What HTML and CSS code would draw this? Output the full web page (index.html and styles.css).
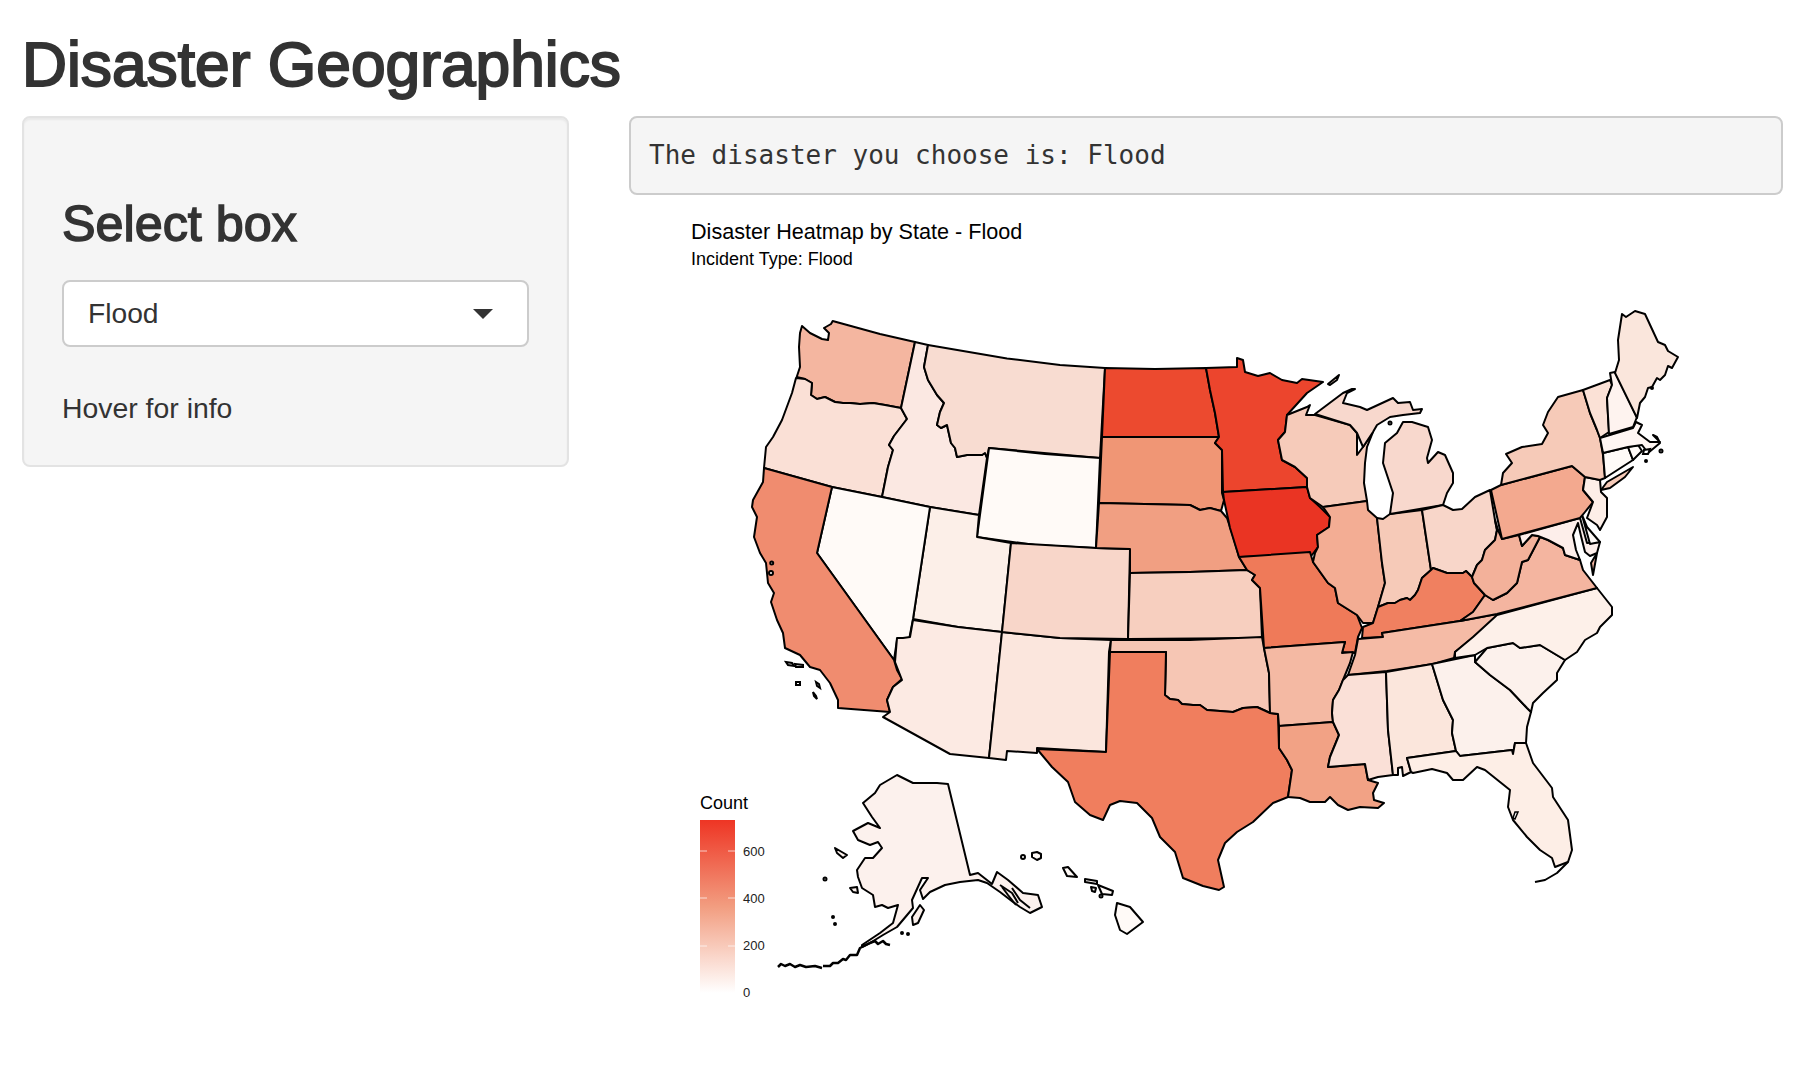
FILE: index.html
```html
<!DOCTYPE html>
<html lang="en">
<head>
  <meta charset="UTF-8">
  <title>Disaster Geographics</title>
  <link rel="stylesheet" href="styles.css">
</head>
<body>
<div class="page">
  <h2 class="page-title">Disaster Geographics</h2>
  <div class="columns">
    <div class="well">
      <h3>Select box</h3>
      <div class="select-box">
        <span>Flood</span>
        <span class="caret"></span>
      </div>
      <p class="hint">Hover for info</p>
    </div>
    <div class="main">
      <pre class="output">The disaster you choose is: Flood</pre>
      <svg class="map" viewBox="629 210 1154 860" width="1154" height="860">
        <defs>
          <linearGradient id="legend-fill" x1="0" y1="0" x2="0" y2="1">
            <stop offset="0" stop-color="#ee3524"/>
            <stop offset="0.5" stop-color="#f29d80"/>
            <stop offset="1" stop-color="#ffffff"/>
          </linearGradient>
        </defs>

        <text class="plot-title" x="691" y="239">Disaster Heatmap by State - Flood</text>
        <text class="plot-subtitle" x="691" y="265">Incident Type: Flood</text>

        <!-- west -->
        <polygon class="st wa" points="832.7,321 880,334 915,342 901,408 885,405 873,403 860,404 850,403 843,403 835,402 825,397 817,399 811,395 812,383 805,379 796.7,377 800,367 799,347 800,333 802,326 810,333 822,339 828,340 829,333 824,328 831,324"/>
        <polygon class="st or" points="796,378 792,393 782,420 773,437 766,447 764,468 832,487 882,497 888,467 893,450 889,445 894,436 907,419 901,408 885,405 873,403 860,404 850,403 843,403 835,402 825,397 817,399 811,395 812,383 805,379"/>
        <polygon class="st id" points="915,342 928,345 924,367 928,380 937,395 944,403 940,412 937,425 941,428 947,425 951,443 955,448 957,457 967,455 982,455 985,453 987,458 979,515 930,507 882,497 888,467 893,450 889,445 894,436 907,419 901,408"/>
        <polygon class="st mt" points="928,345 1007,358.5 1060,365 1105,368 1100,458 989,448 987,458 985,453 982,455 967,455 957,457 955,448 951,443 947,425 941,428 937,425 940,412 944,403 937,395 928,380 924,367"/>
        <polygon class="st wy" points="989,448 1045,454 1100,458 1096,548 1035,545 977,537"/>
        <polygon class="st ut" points="930,507 979,515 977,537 1011,543 1002,632 958,627 913,619"/>
        <polygon class="st nv" points="832,487 882,497 930,507 913,619 909,640 903,638 897,640 894,660 817,553"/>
        <polygon class="st ca" points="764,468 832,487 817,553 894,660 897,670 902,679 893,687 887,700 890,712 838,708 838,700 830,683 820,670 810,667 800,655 785,648 783,633 777,620 771,602 774,593 768,583 766,563 760,553 754,537 757,517 752,507 753,500 763,482"/>
        <polygon class="st az" points="913,620 958,627 1002,632 989,758 950,754 883,717 890,712 887,700 893,687 902,680 895,662 897,638 903,638 910,637"/>
        <polygon class="st nm" points="1002,632 1060,638 1111,640 1109,652 1106,752 1037,748 1037,753 1007,751 1006,760 989,758"/>
        <polygon class="st co" points="1011,543 1096,548 1130,549 1128,639 1060,638 1002,632"/>

        <!-- plains -->
        <polygon class="st nd" points="1105,368 1155,369 1206,368 1210,390 1215,413 1219,437 1102,437"/>
        <polygon class="st sd" points="1102,437 1219,437 1215,443 1222,450 1222,493 1224,500 1221,511 1210,508 1200,510 1190,505 1099,503"/>
        <polygon class="st ne" points="1099,503 1190,505 1200,510 1210,508 1221,511 1227,518 1232,533 1237,550 1239,557 1247,570 1190,572 1130,573 1130,549 1096,548"/>
        <polygon class="st ks" points="1130,573 1190,572 1247,570 1255,575 1252,580 1260,588 1262,638 1128,639"/>
        <polygon class="st ok" points="1111,640 1190,640 1262,637 1264,648 1269,673 1270,713 1257,707 1243,708 1233,712 1220,711 1207,710 1200,705 1193,705 1182,704 1178,700 1170,699 1165,695 1166,652 1110,652"/>
        <polygon class="st tx" points="1110,652 1166,652 1165,695 1170,699 1178,700 1182,704 1193,705 1200,705 1207,710 1220,711 1233,712 1243,708 1257,707 1270,713 1278,714 1279,748 1287,760 1292,770 1288,797 1273,803 1253,822 1237,832 1225,843 1218,860 1224,887 1219,890 1203,886 1183,878 1175,852 1160,837 1152,818 1137,803 1120,801 1110,805 1103,820 1090,815 1075,802 1068,782 1052,767 1037,749 1106,752"/>

        <!-- midwest -->
        <polygon class="st mn" points="1206,368 1237,367 1237,358 1243,360 1245,372 1258,376 1270,373 1282,380 1297,383 1302,379 1323,382 1307,393 1287,415 1285,432 1278,440 1282,460 1295,467 1307,478 1307,487 1223,492 1222,450 1215,443 1219,437 1215,413 1210,390"/>
        <polygon class="st ia" points="1223,492 1307,487 1310,498 1320,507 1330,517 1329,527 1317,535 1318,547 1312,555 1239,557 1230,528 1224,500"/>
        <polygon class="st mo" points="1239,557 1310,552 1313,562 1328,583 1335,588 1338,603 1357,615 1362,628 1358,637 1355,653 1342,652 1345,642 1264,648 1260,588 1252,580 1255,575 1247,570"/>
        <polygon class="st ar" points="1264,648 1345,642 1342,653 1353,652 1350,663 1343,680 1339,690 1333,700 1332,713 1333,722 1279,726 1278,714 1270,713 1269,673"/>
        <polygon class="st la" points="1279,726 1333,722 1339,735 1330,757 1328,767 1365,764 1368,780 1378,783 1373,793 1374,800 1384,803 1378,808 1360,807 1348,810 1338,805 1330,797 1325,802 1310,802 1300,798 1288,797 1292,770 1287,760 1279,748"/>
        <polygon class="st wi" points="1287,415 1307,407 1310,405 1306,415 1315,415 1350,425 1357,433 1357,455 1363,447 1373,432 1367,447 1365,463 1364,483 1367,501 1323,507 1310,498 1307,487 1307,478 1295,467 1282,460 1278,440 1285,432"/>
        <polygon class="st il" points="1323,507 1367,501 1368,510 1377,518 1382,563 1385,583 1378,607 1373,623 1363,623 1357,615 1338,603 1335,588 1328,583 1313,562 1315,553 1318,547 1317,535 1329,527 1330,517"/>
        <polygon class="st in" points="1377,518 1383,519 1390,514 1422,510 1431,570 1422,578 1418,590 1415,595 1410,600 1407,598 1400,600 1395,603 1388,603 1378,607 1385,583 1382,563"/>
        <polygon class="st mi" points="1315,414 1343,393 1352,389 1355,389 1347,393 1343,403 1360,407 1367,410 1393,398 1398,403 1410,402 1413,410 1422,409 1420,413 1403,415 1390,417 1377,425 1373,432 1363,447 1357,433 1350,425"/>
        <polygon class="st mi" points="1403,422 1412,422 1428,427 1432,440 1427,458 1428,463 1438,452 1445,455 1453,473 1453,483 1447,493 1443,505 1390,514 1393,493 1383,463 1385,443 1397,433"/>
        <polygon class="st mi" points="1328,384 1339,375 1337,380 1330,385"/>
        <polygon class="st oh" points="1422,510 1443,505 1453,510 1462,509 1475,497 1490,490 1495,520 1497,530 1495,540 1485,550 1482,560 1477,565 1472,577 1466,571 1463,573 1447,573 1433,568 1431,570"/>
        <polygon class="st ky" points="1362,638 1363,627 1373,623 1378,607 1388,603 1395,603 1400,600 1407,598 1410,600 1415,595 1418,590 1422,578 1431,570 1433,568 1447,573 1463,573 1466,571 1472,577 1474,583 1485,595 1473,612 1460,621 1382,633 1383,637"/>

        <!-- south -->
        <polygon class="st tn" points="1348,675 1355,655 1358,639 1383,637 1382,633 1460,621 1497,614 1495,620 1480,632 1470,640 1455,652 1454,658 1433,664 1387,671"/>
        <polygon class="st ms" points="1348,675 1386,672 1388,730 1393,775 1378,777 1368,780 1365,764 1328,767 1330,757 1339,735 1333,722 1332,713 1333,700 1339,690 1343,680"/>
        <polygon class="st al" points="1386,672 1432,664 1443,700 1453,720 1452,733 1456,751 1407,758 1411,772 1403,776 1402,767 1398,768 1398,775 1393,775 1388,730"/>
        <polygon class="st ga" points="1432,664 1475,655 1475,662 1490,675 1510,690 1527,708 1531,712 1527,727 1526,743 1515,743 1513,754 1512,750 1460,756 1456,751 1452,733 1453,720 1443,700"/>
        <polygon class="st sc" points="1475,662 1487,648 1513,643 1520,648 1540,645 1565,660 1557,673 1557,680 1543,693 1533,703 1531,712 1527,708 1510,690 1490,675"/>
        <polygon class="st nc" points="1455,658 1455,652 1473,637 1497,615 1597,588 1612,607 1612,615 1600,627 1597,633 1585,640 1577,652 1565,660 1540,645 1520,648 1513,643 1487,648 1475,655"/>
        <polygon class="st fl" points="1407,758 1456,751 1460,756 1512,750 1513,754 1515,743 1526,743 1533,763 1552,788 1553,797 1568,820 1572,850 1568,862 1555,867 1552,858 1540,850 1527,837 1513,820 1508,807 1510,790 1500,782 1485,770 1477,767 1463,780 1453,780 1447,773 1432,769 1413,773 1411,772"/>
        <polygon class="islet tampa" points="1515,812 1518,812 1515,819 1513,818"/>
        <polyline class="line" points="1535,882 1545,880 1557,873 1568,862"/>

        <!-- atlantic -->
        <polygon class="st va" points="1485,595 1493,600 1507,593 1517,583 1522,562 1528,560 1540,537 1548,540 1563,548 1565,555 1580,560 1583,570 1597,588 1497,614 1460,621 1473,612"/>
        <polygon class="st va" points="1597,553 1593,575 1591,563"/>
        <polygon class="st wv" points="1495,520 1498,530 1502,539 1519,535 1522,546 1532,535 1538,536 1540,537 1528,560 1522,562 1517,583 1507,593 1493,600 1485,595 1474,583 1472,577 1477,565 1482,560 1485,550 1495,540 1497,530"/>
        <polygon class="st md" points="1519,535 1580,518 1587,543 1600,542 1597,553 1590,556 1585,552 1581,536 1578,523 1573,535 1576,550 1580,560 1565,555 1563,548 1548,540 1538,536 1532,535 1522,546"/>
        <polygon class="st de" points="1582,515 1587,527 1600,542 1590,544"/>
        <polygon class="st pa" points="1491,490 1501,485 1572,466 1585,477 1583,490 1593,502 1585,512 1580,518 1502,539"/>
        <polygon class="st nj" points="1585,477 1600,480 1601,492 1607,498 1607,517 1600,530 1597,525 1587,518 1593,502 1583,490"/>
        <polygon class="st ny" points="1558,397 1583,390 1590,413 1597,430 1600,438 1603,455 1605,478 1600,480 1585,477 1572,466 1501,485 1503,473 1512,463 1506,454 1522,447 1542,444 1548,433 1543,425 1548,412"/>
        <polygon class="st ny" points="1601,490 1607,482 1633,467 1625,477 1610,488"/>
        <polygon class="st ct" points="1603,453 1628,447 1633,460 1605,478"/>
        <polygon class="st ri" points="1628,447 1638,445 1642,451 1633,460"/>
        <polygon class="st ma" points="1600,438 1633,428 1636,422 1642,425 1638,433 1650,442 1660,442 1653,435 1657,437 1660,443 1648,453 1642,445 1628,447 1603,453"/>
        <polygon class="st vt" points="1583,390 1610,380 1612,385 1607,398 1609,432 1600,438 1597,430 1590,413"/>
        <polygon class="st nh" points="1610,373 1615,372 1637,417 1633,427 1609,434 1607,398 1612,385"/>
        <polygon class="st me" points="1622,314 1626,317 1635,311 1645,314 1658,342 1665,345 1668,351 1678,357 1672,368 1668,366 1665,375 1660,380 1657,378 1652,387 1648,388 1645,397 1640,403 1637,418 1615,373 1619,360 1618,340"/>

        <!-- small islands off the coasts -->
        <polygon class="islet" points="786,662 792,663 794,666 788,665"/>
        <polygon class="islet" points="795,664 803,665 803,667 796,667"/>
        <polygon class="islet" points="796,682 800,682 800,685 796,685"/>
        <polygon class="islet" points="816,682 819,684 820,688 817,686"/>
        <polygon class="islet" points="813,692 816,696 817,699 814,696"/>
        <circle class="islet" cx="771.7" cy="563" r="1.5"/>
        <circle class="islet" cx="771" cy="573" r="2"/>
        <circle class="islet" cx="1390" cy="423" r="1.5"/>
        <circle class="islet" cx="1652" cy="388" r="1"/>
        <circle class="islet" cx="1646" cy="461" r="1"/>
        <circle class="islet" cx="1661" cy="451" r="1.5"/>
        <polygon class="islet" points="1644,450 1650,449 1648,454 1643,454"/>

        <!-- alaska -->
        <polygon class="st ak" points="948,784 970,875 978,873 992,884 997,872 1008,880 1023,893 1038,895 1042,907 1030,913 1020,907 1013,902 1000,892 987,883 978,880 960,882 945,885 930,892 923,899 920,890 928,878 922,878 912,900 913,908 897,927 883,935 870,943 862,947 862,945 880,933 893,923 898,905 888,908 882,905 875,907 873,895 862,888 858,877 857,870 865,858 873,858 882,848 878,842 870,845 858,840 853,831 868,823 880,828 872,817 863,803 875,793 880,785 897,775 913,783 937,783"/>
        <polygon class="st ak" points="913,925 912,917 920,905 924,910 918,923"/>
        <polygon class="st ak" points="835,848 847,855 843,858 837,853"/>
        <polygon class="st ak" points="850,888 857,887 858,893 853,892"/>
        <polyline class="line" points="1002,887 1008,895 1016,905"/>
        <polyline class="line" points="1012,888 1020,900 1030,908"/>
        <polyline class="line" points="1000,885 1012,893 1018,903"/>
        <polyline class="chain" points="778,967 781,964 785,966 790,964 795,967 800,965 806,967 815,966 822,968"/>
        <polyline class="chain" points="823,966 830,966 833,963 838,963 843,959 846,960 850,955 857,955 860,948 870,943"/>
        <polyline class="chain" points="870,943 875,941 878,944 883,941 886,944 890,945"/>
        <circle class="islet" cx="825" cy="879" r="1.5"/>
        <circle class="islet" cx="833" cy="917" r="1"/>
        <circle class="islet" cx="835" cy="924" r="1"/>
        <circle class="islet" cx="902" cy="933" r="1"/>
        <circle class="islet" cx="908" cy="934" r="1"/>

        <!-- hawaii -->
        <polygon class="st hi" points="1117,903 1130,907 1143,922 1127,934 1120,930 1115,915"/>
        <polygon class="st hi" points="1098,885 1113,891 1112,895 1102,894"/>
        <polygon class="st hi" points="1085,879 1097,881 1097,884 1085,882"/>
        <polygon class="st hi" points="1091,887 1096,888 1095,892 1092,891"/>
        <polygon class="st hi" points="1063,868 1068,867 1077,877 1067,876"/>
        <polygon class="st hi" points="1032,853 1037,852 1041,854 1041,858 1037,860 1032,857"/>
        <circle class="islet" cx="1023" cy="857" r="2"/>
        <circle class="islet" cx="1101" cy="896" r="1.5"/>

        <!-- legend -->
        <text class="legend-title" x="700" y="809">Count</text>
        <rect x="700" y="820" width="35" height="173" fill="url(#legend-fill)"/>
        <path class="legend-tick" d="M700 851h7M728 851h7M700 898h7M728 898h7M700 946h7M728 946h7"/>
        <text class="legend-label" x="743" y="856">600</text>
        <text class="legend-label" x="743" y="903">400</text>
        <text class="legend-label" x="743" y="950">200</text>
        <text class="legend-label" x="743" y="997">0</text>
      </svg>
    </div>
  </div>
</div>
</body>
</html>
```

FILE: styles.css
```css
html, body {
  margin: 0;
  background: #ffffff;
}

body {
  font-family: 'Liberation Sans', Arial, sans-serif;
  color: #333333;
}

.page {
  padding: 0 18px 0 22px;
}

.page-title {
  margin: 0;
  padding-top: 32px;
  height: 116px;
  box-sizing: border-box;
  font-size: 62.3px;
  line-height: 66px;
  font-weight: 400;
  -webkit-text-stroke: 2px #333333;
}

.columns {
  display: grid;
  grid-template-columns: 547px 1fr;
  gap: 60px;
}

.well {
  height: 351px;
  box-sizing: border-box;
  padding: 38px 38px 0;
  background: #f5f5f5;
  border: 2px solid #e3e3e3;
  border-radius: 8px;
  box-shadow: inset 0 2px 2px rgba(0, 0, 0, 0.05);
}

.well h3 {
  margin: 41px 0 30px;
  font-size: 50.3px;
  line-height: 53px;
  font-weight: 400;
  -webkit-text-stroke: 1.5px #333333;
}

.select-box {
  display: flex;
  align-items: center;
  justify-content: space-between;
  height: 67px;
  box-sizing: border-box;
  padding: 0 34px 0 24px;
  background: #ffffff;
  border: 2px solid #cccccc;
  border-radius: 8px;
  font-size: 28.2px;
}

.caret {
  width: 0;
  height: 0;
  border-left: 10px solid transparent;
  border-right: 10px solid transparent;
  border-top: 10px solid #333333;
}

.hint {
  margin: 41px 0 0;
  font-size: 28.4px;
  line-height: 40px;
}

.output {
  margin: 0 0 15px;
  height: 79px;
  box-sizing: border-box;
  padding: 19px 18px;
  background: #f5f5f5;
  border: 2px solid #cccccc;
  border-radius: 8px;
  font-family: 'DejaVu Sans Mono', monospace;
  font-size: 26px;
  line-height: 37px;
  color: #333333;
}

.map {
  display: block;
}

.plot-title {
  font-size: 21.6px;
  fill: #000000;
}

.plot-subtitle {
  font-size: 18px;
  fill: #000000;
}

.legend-title {
  font-size: 18px;
  fill: #000000;
}

.legend-label {
  font-size: 13px;
  fill: #222222;
}

.legend-tick {
  stroke: #ffffff;
  stroke-width: 1;
  opacity: 0.7;
}

.st {
  stroke: #000000;
  stroke-width: 2;
  stroke-linejoin: round;
}

.line {
  fill: none;
  stroke: #000000;
  stroke-width: 2;
  stroke-linejoin: round;
}

.chain {
  fill: none;
  stroke: #000000;
  stroke-width: 2.5;
  stroke-linejoin: round;
}

.islet {
  fill: #ffffff;
  stroke: #000000;
  stroke-width: 2;
}

.tampa {
  stroke-width: 1.5;
}

.ia { fill: #ea3423; }
.mn { fill: #ec452d; }
.nd { fill: #ec4a2f; }
.mo { fill: #ef7a59; }
.ky { fill: #f08060; }
.tx { fill: #f07e5e; }
.ca { fill: #f08c6f; }
.sd { fill: #f09675; }
.ne { fill: #f19f82; }
.la { fill: #f2a285; }
.pa { fill: #f3a98f; }
.il { fill: #f3ad94; }
.wv { fill: #f3b19a; }
.va { fill: #f4b5a0; }
.wa { fill: #f4b6a0; }
.ar { fill: #f4b9a3; }
.tn { fill: #f5bba6; }
.ok { fill: #f6c6b4; }
.ks { fill: #f7cfbf; }
.in { fill: #f6cab8; }
.wi { fill: #f6cbba; }
.ny { fill: #f6cab8; }
.mi { fill: #f8d8cd; }
.oh { fill: #f8d6c9; }
.co { fill: #f8d6c9; }
.mt { fill: #f8dcd1; }
.or { fill: #fae0d6; }
.ms { fill: #fae0d7; }
.vt { fill: #fbe1d6; }
.al { fill: #fbe6dc; }
.nm { fill: #fbe6dd; }
.me { fill: #fae6dc; }
.id { fill: #fbe8e2; }
.az { fill: #fceae3; }
.ut { fill: #fcefe8; }
.fl { fill: #fdeee6; }
.nj { fill: #fdeee7; }
.md { fill: #fdeeea; }
.nc { fill: #fdf0e9; }
.ga { fill: #fcf1ec; }
.sc { fill: #fcf1ec; }
.ak { fill: #fcf1ed; }
.nh { fill: #fef3ef; }
.ma { fill: #fef5f2; }
.hi { fill: #fffaf7; }
.nv { fill: #fffaf7; }
.wy { fill: #fffaf7; }
.ri { fill: #fffaf7; }
.ct { fill: #fffbf8; }
.de { fill: #fffaf7; }
```
